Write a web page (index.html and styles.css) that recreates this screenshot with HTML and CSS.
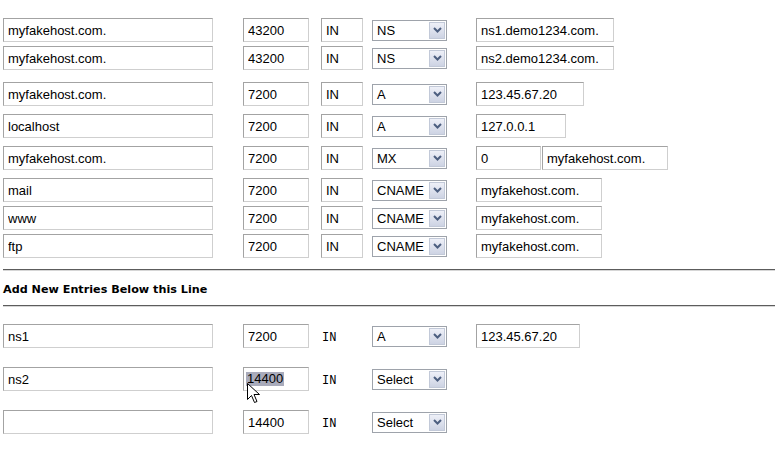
FILE: index.html
```html
<!DOCTYPE html>
<html>
<head>
<meta charset="utf-8">
<title>DNS Zone</title>
<link rel="stylesheet" href="styles.css">
</head>
<body>
<div class="zone">
  <div class="row">
    <input class="f name" value="myfakehost.com.">
    <input class="f ttl" value="43200">
    <input class="f cls" value="IN">
    <div class="sel"><span class="sv">NS</span><span class="btn"><svg width="9" height="6" viewBox="0 0 9 6"><path d="M1 1 L4.5 4.5 L8 1" fill="none" stroke="#4d5f80" stroke-width="2"/></svg></span></div>
    <input class="f val w138" value="ns1.demo1234.com.">
  </div>
  <div class="row g4">
    <input class="f name" value="myfakehost.com.">
    <input class="f ttl" value="43200">
    <input class="f cls" value="IN">
    <div class="sel"><span class="sv">NS</span><span class="btn"><svg width="9" height="6" viewBox="0 0 9 6"><path d="M1 1 L4.5 4.5 L8 1" fill="none" stroke="#4d5f80" stroke-width="2"/></svg></span></div>
    <input class="f val w138" value="ns2.demo1234.com.">
  </div>
  <div class="row g12">
    <input class="f name" value="myfakehost.com.">
    <input class="f ttl" value="7200">
    <input class="f cls" value="IN">
    <div class="sel"><span class="sv">A</span><span class="btn"><svg width="9" height="6" viewBox="0 0 9 6"><path d="M1 1 L4.5 4.5 L8 1" fill="none" stroke="#4d5f80" stroke-width="2"/></svg></span></div>
    <input class="f val w108" value="123.45.67.20">
  </div>
  <div class="row g8">
    <input class="f name" value="localhost">
    <input class="f ttl" value="7200">
    <input class="f cls" value="IN">
    <div class="sel"><span class="sv">A</span><span class="btn"><svg width="9" height="6" viewBox="0 0 9 6"><path d="M1 1 L4.5 4.5 L8 1" fill="none" stroke="#4d5f80" stroke-width="2"/></svg></span></div>
    <input class="f val w90" value="127.0.0.1">
  </div>
  <div class="row g8">
    <input class="f name" value="myfakehost.com.">
    <input class="f ttl" value="7200">
    <input class="f cls" value="IN">
    <div class="sel"><span class="sv">MX</span><span class="btn"><svg width="9" height="6" viewBox="0 0 9 6"><path d="M1 1 L4.5 4.5 L8 1" fill="none" stroke="#4d5f80" stroke-width="2"/></svg></span></div>
    <input class="f val w66" value="0">
    <input class="f host w126" value="myfakehost.com.">
  </div>
  <div class="row g8">
    <input class="f name" value="mail">
    <input class="f ttl" value="7200">
    <input class="f cls" value="IN">
    <div class="sel"><span class="sv">CNAME</span><span class="btn"><svg width="9" height="6" viewBox="0 0 9 6"><path d="M1 1 L4.5 4.5 L8 1" fill="none" stroke="#4d5f80" stroke-width="2"/></svg></span></div>
    <input class="f val w126" value="myfakehost.com.">
  </div>
  <div class="row g4">
    <input class="f name" value="www">
    <input class="f ttl" value="7200">
    <input class="f cls" value="IN">
    <div class="sel"><span class="sv">CNAME</span><span class="btn"><svg width="9" height="6" viewBox="0 0 9 6"><path d="M1 1 L4.5 4.5 L8 1" fill="none" stroke="#4d5f80" stroke-width="2"/></svg></span></div>
    <input class="f val w126" value="myfakehost.com.">
  </div>
  <div class="row g4">
    <input class="f name" value="ftp">
    <input class="f ttl" value="7200">
    <input class="f cls" value="IN">
    <div class="sel"><span class="sv">CNAME</span><span class="btn"><svg width="9" height="6" viewBox="0 0 9 6"><path d="M1 1 L4.5 4.5 L8 1" fill="none" stroke="#4d5f80" stroke-width="2"/></svg></span></div>
    <input class="f val w126" value="myfakehost.com.">
  </div>

  <div class="divider first"></div>
  <div class="heading">Add New Entries Below this Line</div>
  <div class="divider"></div>

  <div class="row new first-new">
    <input class="f name" value="ns1">
    <input class="f ttl" value="7200">
    <span class="cls-text">IN</span>
    <div class="sel"><span class="sv">A</span><span class="btn"><svg width="9" height="6" viewBox="0 0 9 6"><path d="M1 1 L4.5 4.5 L8 1" fill="none" stroke="#4d5f80" stroke-width="2"/></svg></span></div>
    <input class="f val w104" value="123.45.67.20">
  </div>
  <div class="row new">
    <input class="f name" value="ns2">
    <div class="f ttl fake"><span class="hl">14400</span>
      <svg class="cursor" width="13" height="21" viewBox="0 0 13 21"><path d="M0.5 0.5 L0.5 16.5 L4.5 12.5 L7.5 19.5 L10 18.5 L7 11.5 L12.5 11.5 Z" fill="#fff" stroke="#000" stroke-width="1"/></svg>
    </div>
    <span class="cls-text">IN</span>
    <div class="sel"><span class="sv">Select</span><span class="btn"><svg width="9" height="6" viewBox="0 0 9 6"><path d="M1 1 L4.5 4.5 L8 1" fill="none" stroke="#4d5f80" stroke-width="2"/></svg></span></div>
  </div>
  <div class="row new">
    <input class="f name" value="">
    <input class="f ttl" value="14400">
    <span class="cls-text">IN</span>
    <div class="sel"><span class="sv">Select</span><span class="btn"><svg width="9" height="6" viewBox="0 0 9 6"><path d="M1 1 L4.5 4.5 L8 1" fill="none" stroke="#4d5f80" stroke-width="2"/></svg></span></div>
  </div>
</div>
</body>
</html>
```

FILE: styles.css
```css
html, body {
  margin: 0;
  padding: 0;
  background: #fff;
}
body {
  font-family: "Liberation Sans", Arial, sans-serif;
  font-size: 13px;
  color: #000;
}
.zone {
  padding: 18px 0 0 3px;
}
.row {
  display: flex;
  align-items: center;
  height: 24px;
}
.g4 { margin-top: 4px; }
.g8 { margin-top: 8px; }
.g12 { margin-top: 12px; }

.f {
  box-sizing: border-box;
  height: 24px;
  margin: 0;
  padding: 0 4px;
  font: 13px "Liberation Sans", Arial, sans-serif;
  color: #000;
  background: #fff;
  border: 1px solid;
  border-color: #a3a3a3 #cfcfcf #cfcfcf #a3a3a3;
  border-radius: 0;
  outline: none;
}
.name { width: 210px; }
.ttl { width: 66px; margin-left: 30px; }
.cls { width: 42px; margin-left: 12px; }
.val { margin-left: 29px; }
.host { margin-left: 1px; }
.w138 { width: 138px; }
.w108 { width: 108px; }
.w104 { width: 104px; }
.w90 { width: 90px; }
.w66 { width: 65px; }
.w126 { width: 126px; }

.sel {
  box-sizing: border-box;
  width: 75px;
  height: 21px;
  margin-left: 9px;
  border: 1px solid #9ea3ab;
  background: #fff;
  display: flex;
  align-items: center;
  justify-content: space-between;
  padding: 0 1px 0 4px;
}
.sv {
  font-size: 13px;
  line-height: 17px;
}
.btn {
  box-sizing: border-box;
  width: 16px;
  height: 17px;
  border: 1px solid #c2c9d8;
  background: linear-gradient(#eef0f8, #cdd3e3);
  display: flex;
  align-items: center;
  justify-content: center;
}

.divider {
  height: 0;
  margin-right: 1px;
  border-top: 1px solid #5c5c5c;
  border-bottom: 1px solid #d6d6d6;
}
.divider.first { margin-top: 11px; }
.heading {
  font: bold 11.2px "DejaVu Sans", Verdana, sans-serif;
  height: 13px;
  line-height: 13px;
  margin: 12px 0 9px;
}

.new { margin-top: 19px; }
.first-new { margin-top: 17px; }
.cls-text {
  width: 42px;
  margin-left: 12px;
  padding-left: 1px;
  box-sizing: border-box;
  font: 12px "Liberation Mono", "Courier New", monospace;
  padding-top: 3px;
}

.fake {
  position: relative;
  display: flex;
  align-items: center;
  padding-left: 2px;
}
.hl {
  background: #a9abbb;
  padding: 0 1px;
  line-height: 14px;
}
.cursor {
  position: absolute;
  left: 3px;
  top: 15px;
}
```
